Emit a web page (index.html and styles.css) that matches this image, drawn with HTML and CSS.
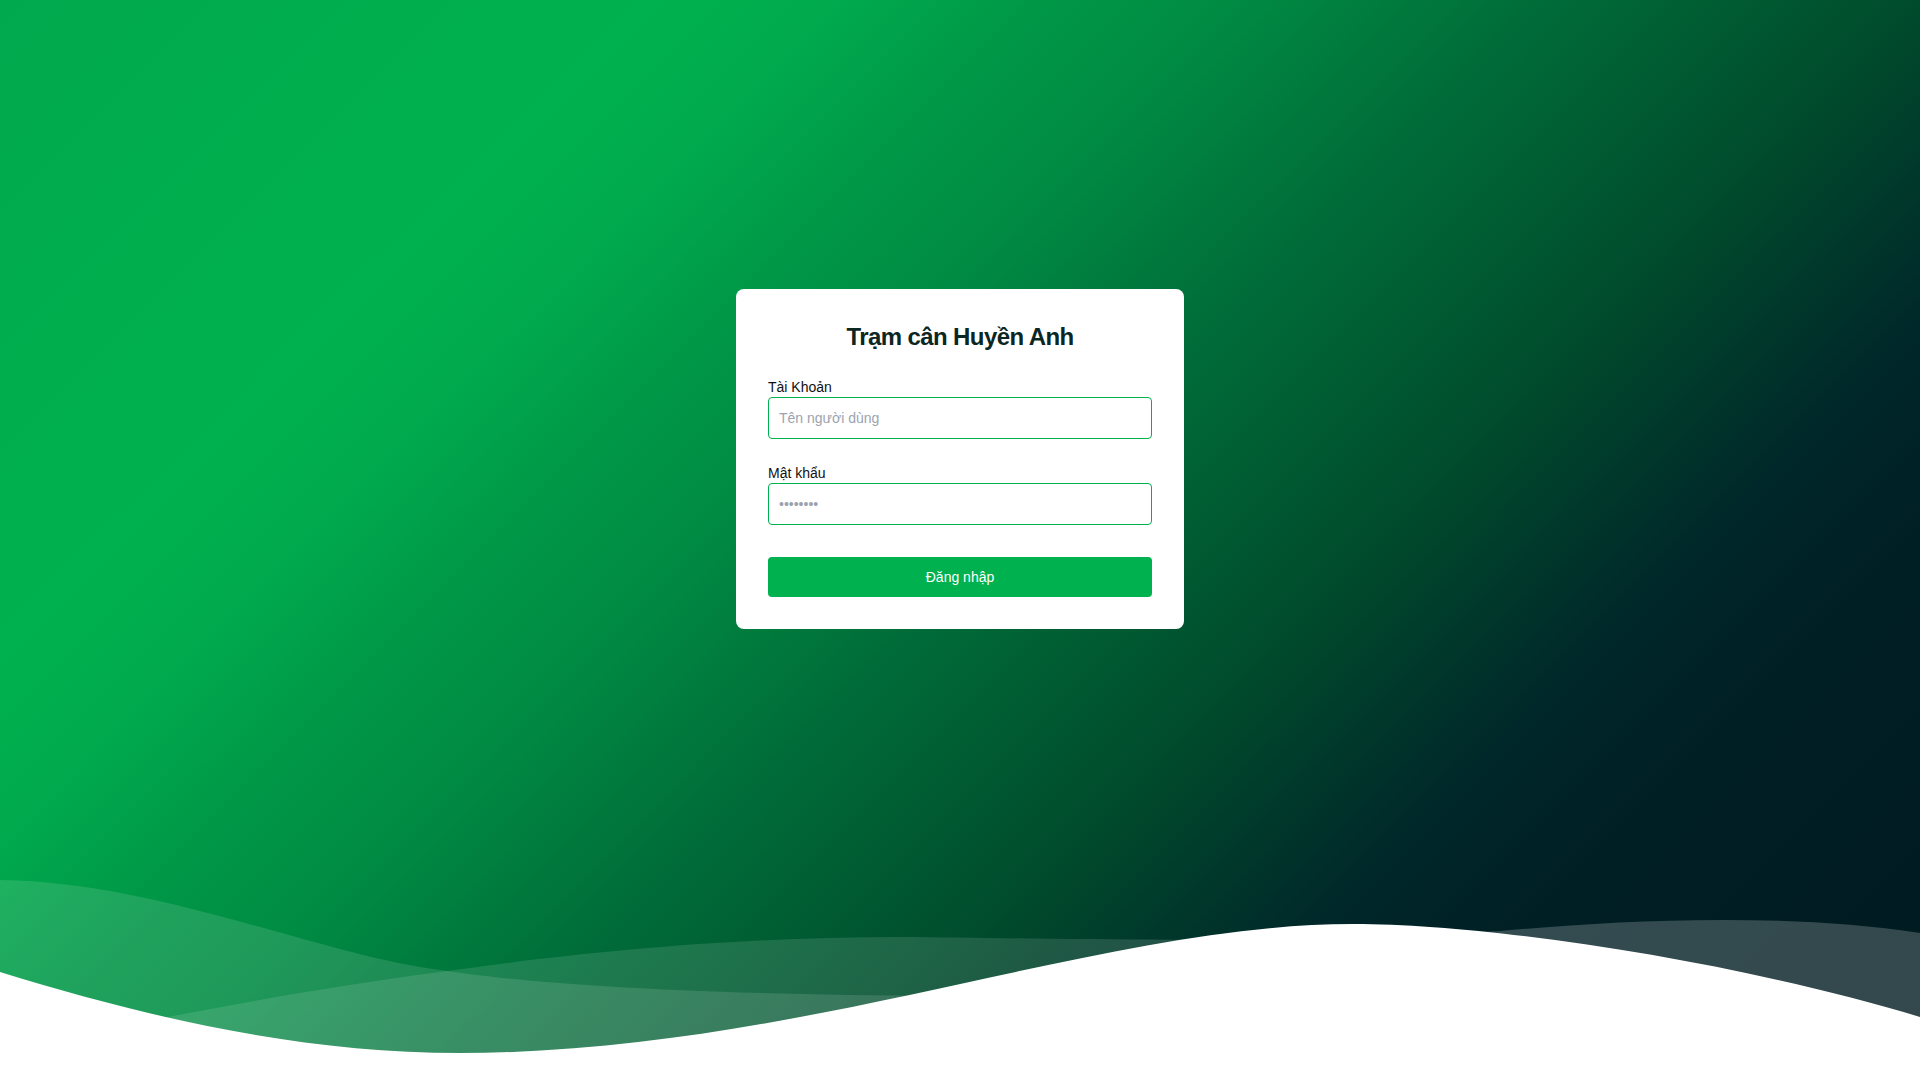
FILE: index.html
```html
<!DOCTYPE html>
<html lang="vi">
<head>
<meta charset="utf-8">
<title>Trạm cân Huyền Anh</title>
<link rel="stylesheet" href="styles.css">
</head>
<body>
<div class="page">
  <svg class="waves" viewBox="0 860 1920 220" preserveAspectRatio="none" aria-hidden="true">
    <defs>
      <linearGradient id="l2fill" x1="0" y1="0" x2="1920" y2="0" gradientUnits="userSpaceOnUse">
        <stop offset="0" stop-color="#ffffff" stop-opacity="0.11"/>
        <stop offset="0.55" stop-color="#ffffff" stop-opacity="0.12"/>
        <stop offset="0.75" stop-color="#ffffff" stop-opacity="0.2"/>
        <stop offset="1" stop-color="#ffffff" stop-opacity="0.2"/>
      </linearGradient>
    </defs>
    <path class="wave-one" d="M0,880 C160,882 320,955 440,970 C520,982 650,994 950,996 C1200,997 1500,1060 1920,1090 L1920,1090 L0,1090 Z"/>
    <path fill="url(#l2fill)" d="M0,1050 C150,1020 300,990 440,972 C560,955 720,937 900,937 C1050,938 1250,945 1500,931 C1620,920 1780,912 1920,933 L1920,1090 L0,1090 Z"/>
    <path class="wave-front" d="M0,972 C150,1018 300,1053 460,1053 C800,1053 1100,924 1353,924 C1500,924 1750,965 1920,1017 L1920,1090 L0,1090 Z"/>
  </svg>

  <main class="card">
    <h1 class="title">Trạm cân Huyền Anh</h1>
    <form class="form" onsubmit="return false;">
      <div class="field">
        <label class="label" for="username">Tài Khoản</label>
        <input class="input" id="username" type="text" placeholder="Tên người dùng">
      </div>
      <div class="field field-last">
        <label class="label" for="password">Mật khẩu</label>
        <input class="input" id="password" type="password" placeholder="••••••••">
      </div>
      <button class="button" type="submit">Đăng nhập</button>
    </form>
  </main>
</div>
</body>
</html>
```

FILE: styles.css
```css
* {
  box-sizing: border-box;
}

html, body {
  margin: 0;
  padding: 0;
  height: 100%;
}

body {
  font-family: "Liberation Sans", Arial, sans-serif;
  overflow: hidden;
}

.page {
  position: relative;
  width: 100%;
  height: 100vh;
  display: flex;
  align-items: center;
  justify-content: center;
  padding-bottom: 162px;
  background: linear-gradient(135deg,
    #00a94d 0%,
    #00b14f 22%,
    #00aa4d 28%,
    #009747 35%,
    #008b43 41%,
    #00703a 50%,
    #004b2c 64%,
    #00272a 75%,
    #001f25 82%,
    #001a1f 100%);
}

.waves {
  position: absolute;
  left: 0;
  bottom: 0;
  width: 100%;
  height: 220px;
  display: block;
}

.wave-one {
  fill: #ffffff;
  fill-opacity: 0.12;
}

.wave-front {
  fill: #ffffff;
}

.card {
  position: relative;
  width: 448px;
  background: #ffffff;
  border-radius: 8px;
  padding: 32px;
}

.title {
  margin: 0 0 24px;
  font-size: 24px;
  line-height: 32px;
  font-weight: 700;
  letter-spacing: -0.6px;
  text-align: center;
  color: #0c2622;
}

.form {
  display: flex;
  flex-direction: column;
}

.field {
  display: flex;
  flex-direction: column;
  margin-bottom: 24px;
}

.field-last {
  margin-bottom: 32px;
}

.label {
  font-size: 14px;
  line-height: 20px;
  color: #111111;
}

.input {
  height: 42px;
  width: 100%;
  border: 1px solid #00b14f;
  border-radius: 4px;
  padding: 0 10px;
  font-family: "Liberation Sans", Arial, sans-serif;
  font-size: 14px;
  color: #111111;
  background: #ffffff;
  outline: none;
}

.input::placeholder {
  color: #9ca3af;
  opacity: 1;
}

.button {
  height: 40px;
  width: 100%;
  border: none;
  border-radius: 4px;
  background: #00b14f;
  color: #ffffff;
  font-family: "Liberation Sans", Arial, sans-serif;
  font-size: 14px;
  cursor: pointer;
}
```
